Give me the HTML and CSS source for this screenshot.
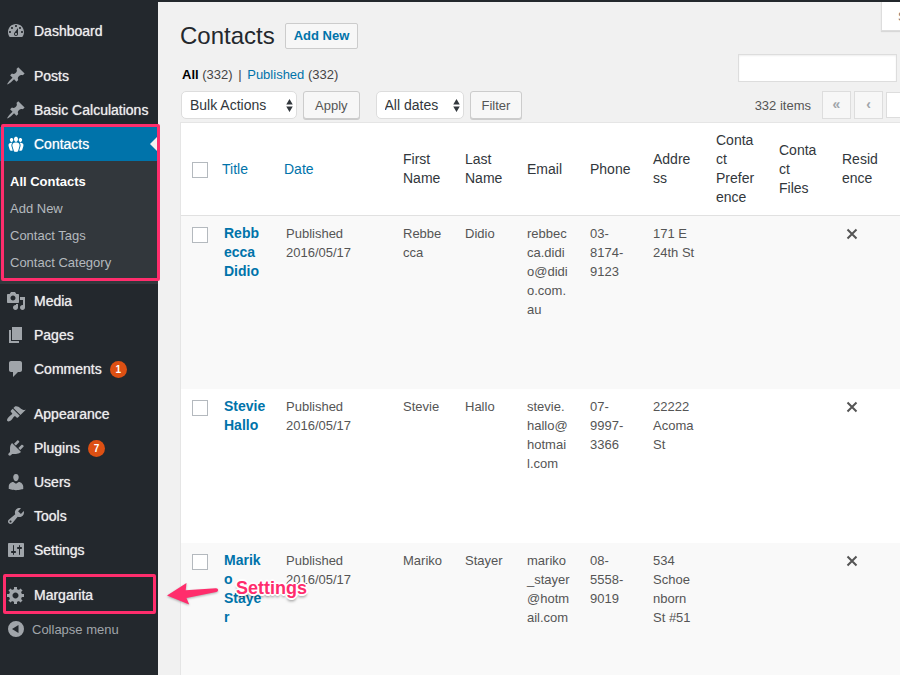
FILE: index.html
```html
<!DOCTYPE html>
<html lang="en">
<head>
<meta charset="utf-8">
<title>Contacts</title>
<link rel="stylesheet" href="styles.css">
</head>
<body>
<div class="app">
  <nav class="sidebar" aria-label="Main menu">
    <ul class="menu">
      <li><a class="item" href="#"><svg class="icon" viewBox="0 0 20 20"><path d="M3.76 16h12.48c1.1-1.37 1.76-3.11 1.76-5 0-4.42-3.58-8-8-8s-8 3.58-8 8c0 1.89.66 3.63 1.76 5zM10 4c.55 0 1 .45 1 1s-.45 1-1 1-1-.45-1-1 .45-1 1-1zM6 6c.55 0 1 .45 1 1s-.45 1-1 1-1-.45-1-1 .45-1 1-1zm8 0c.55 0 1 .45 1 1s-.45 1-1 1-1-.45-1-1 .45-1 1-1zm-5.37 5.55L12 7v6c0 1.1-.9 2-2 2s-2-.9-2-2c0-.57.24-1.08.63-1.45zM4 10c.55 0 1 .45 1 1s-.45 1-1 1-1-.45-1-1 .45-1 1-1zm12 0c.55 0 1 .45 1 1s-.45 1-1 1-1-.45-1-1 .45-1 1-1zm-5 3c0-.55-.45-1-1-1s-1 .45-1 1 .45 1 1 1 1-.45 1-1z"/></svg>Dashboard</a></li>
      <li class="group-start"><a class="item" href="#"><svg class="icon" viewBox="0 0 20 20"><path d="M10.44 3.02l1.82-1.82 6.36 6.35-1.83 1.82c-1.05-.68-2.48-.57-3.41.36l-.75.75c-.92.93-1.04 2.35-.35 3.41l-1.83 1.82-2.41-2.41-2.8 2.79c-.42.42-3.38 2.71-3.8 2.29s1.86-3.39 2.28-3.81l2.79-2.79L4.1 9.36l1.83-1.82c1.05.69 2.48.57 3.4-.36l.75-.75c.93-.92 1.05-2.35.36-3.41z"/></svg>Posts</a></li>
      <li><a class="item" href="#"><svg class="icon" viewBox="0 0 20 20"><path d="M10.44 3.02l1.82-1.82 6.36 6.35-1.83 1.82c-1.05-.68-2.48-.57-3.41.36l-.75.75c-.92.93-1.04 2.35-.35 3.41l-1.83 1.82-2.41-2.41-2.8 2.79c-.42.42-3.38 2.71-3.8 2.29s1.86-3.39 2.28-3.81l2.79-2.79L4.1 9.36l1.83-1.82c1.05.69 2.48.57 3.4-.36l.75-.75c.93-.92 1.05-2.35.36-3.41z"/></svg>Basic Calculations</a></li>
      <li class="open">
        <a class="item current" href="#"><svg class="icon" viewBox="0 0 20 20"><path d="M8.03 4.46c-.29 1.28.55 3.46 1.97 3.46 1.41 0 2.25-2.18 1.96-3.46-.22-.98-1.08-1.63-1.96-1.63-.89 0-1.74.65-1.97 1.63zm-4.13.9c-.25 1.08.47 2.93 1.67 2.93s1.92-1.85 1.67-2.93c-.19-.83-.92-1.39-1.67-1.39s-1.48.56-1.67 1.39zm8.86 0c-.25 1.08.47 2.93 1.66 2.93 1.2 0 1.92-1.85 1.67-2.93-.19-.83-.92-1.39-1.67-1.39-.74 0-1.47.56-1.66 1.39zm-.59 11.43l1.25-4.3C14.2 10 12.71 8.47 10 8.47c-2.72 0-4.21 1.53-3.44 4.02l1.26 4.3C8.05 17.51 9 18 10 18c.98 0 1.94-.49 2.17-1.21zm-6.1-7.63c-.49.67-.96 1.83-.42 3.59l1.12 3.79c-.34.2-.77.31-1.2.31-.85 0-1.65-.41-1.85-1.03l-1.07-3.65c-.65-2.11.61-3.4 2.92-3.4.27 0 .54.02.79.06-.1.1-.2.22-.29.33zm8.35-.39c2.31 0 3.58 1.29 2.92 3.4l-1.07 3.65c-.2.62-1 1.03-1.85 1.03-.43 0-.86-.11-1.2-.31l1.11-3.77c.55-1.78.08-2.94-.42-3.61-.08-.11-.18-.23-.28-.33.25-.04.51-.06.79-.06z"/></svg>Contacts</a>
        <ul class="submenu">
          <li><a class="active" href="#">All Contacts</a></li>
          <li><a href="#">Add New</a></li>
          <li><a href="#">Contact Tags</a></li>
          <li><a href="#">Contact Category</a></li>
        </ul>
        <span class="outline outline-group"></span>
      </li>
      <li><a class="item" href="#"><svg class="icon" viewBox="0 0 20 20"><path d="M13 11V4c0-.55-.45-1-1-1h-1.67L9 1H5L3.67 3H2c-.55 0-1 .45-1 1v7c0 .55.45 1 1 1h10c.55 0 1-.45 1-1zM7 4.500c1.380 0 2.500 1.120 2.500 2.500S8.380 9.500 7 9.500 4.500 8.380 4.500 7 5.620 4.500 7 4.500zM14 6h5v10.500c0 1.380-1.120 2.500-2.500 2.500S14 17.880 14 16.500s1.120-2.500 2.500-2.500c.17 0 .34.02.5.05V9h-3V6zm-4 8.050V13h2v3.500c0 1.380-1.120 2.500-2.500 2.500S7 17.880 7 16.500 8.120 14 9.500 14c.17 0 .34.02.5.05z"/></svg>Media</a></li>
      <li><a class="item" href="#"><svg class="icon" viewBox="0 0 20 20"><path d="M6 15V2h10v13H6zm-1 1h8v2H3V5h2v11z"/></svg>Pages</a></li>
      <li><a class="item" href="#"><svg class="icon" viewBox="0 0 20 20"><path d="M5 2h9c1.1 0 2 .9 2 2v7c0 1.1-.9 2-2 2h-2l-5 5v-5H5c-1.1 0-2-.9-2-2V4c0-1.1.9-2 2-2z"/></svg>Comments<span class="badge">1</span></a></li>
      <li class="group-start"><a class="item" href="#"><svg class="icon" viewBox="0 0 20 20"><path d="M14.48 11.06L7.41 3.99l1.5-1.5c.5-.56 2.3-.47 3.51.32 1.21.8 1.43 1.28 2.91 2.1 1.18.64 2.45 1.26 4.45.85zm-.71.71L6.7 4.7 4.93 6.47c-.39.39-.39 1.02 0 1.41l1.06 1.06c.39.39.39 1.03 0 1.42-.6.6-1.43 1.11-2.21 1.69-.35.26-.7.53-1.01.84C1.43 14.23.4 16.08 1.4 17.07c.99 1 2.84-.03 4.18-1.36.31-.31.58-.66.85-1.02.57-.78 1.08-1.61 1.69-2.21.39-.39 1.02-.39 1.41 0l1.06 1.06c.39.39 1.02.39 1.41 0z"/></svg>Appearance</a></li>
      <li><a class="item" href="#"><svg class="icon" viewBox="0 0 20 20"><path d="M13.11 4.36L9.87 7.6 8 5.73l3.24-3.24c.35-.34 1.05-.2 1.56.32.52.51.66 1.21.31 1.55zm-8 1.77l.91-1.12 9.01 9.01-1.19.84c-.71.71-2.63 1.16-3.82 1.16H6.14L4.9 17.26c-.59.59-1.54.59-2.12 0-.59-.58-.59-1.53 0-2.12l1.24-1.24v-3.88c0-1.13.4-3.19 1.09-3.89zm7.26 3.97l3.24-3.24c.34-.35 1.04-.21 1.55.31.52.51.66 1.21.31 1.55l-3.24 3.25z"/></svg>Plugins<span class="badge">7</span></a></li>
      <li><a class="item" href="#"><svg class="icon" viewBox="0 0 20 20"><path d="M10 9.25c-2.27 0-2.73-3.44-2.73-3.44C7 4.02 7.82 2 9.97 2c2.16 0 2.98 2.02 2.71 3.81 0 0-.41 3.44-2.68 3.44zm0 2.57L12.72 10c2.39 0 4.52 2.33 4.52 4.53v2.49s-3.65 1.13-7.24 1.13c-3.65 0-7.24-1.13-7.24-1.13v-2.49c0-2.25 1.94-4.48 4.47-4.48z"/></svg>Users</a></li>
      <li><a class="item" href="#"><svg class="icon" viewBox="0 0 20 20"><path d="M16.68 9.77c-1.34 1.34-3.3 1.67-4.95.99l-5.41 6.52c-.99.99-2.59.99-3.58 0s-.99-2.59 0-3.57l6.52-5.42c-.68-1.65-.35-3.61.99-4.95 1.28-1.28 3.12-1.62 4.72-1.06l-2.89 2.89 2.82 2.82 2.86-2.87c.53 1.58.18 3.39-1.08 4.65zM3.81 16.21c.4.39 1.04.39 1.43 0 .4-.4.4-1.04 0-1.43-.39-.4-1.03-.4-1.43 0-.39.39-.39 1.03 0 1.43z"/></svg>Tools</a></li>
      <li><a class="item" href="#"><svg class="icon" viewBox="0 0 20 20"><path d="M18 16V4c0-.55-.45-1-1-1H3c-.55 0-1 .45-1 1v12c0 .55.45 1 1 1h14c.55 0 1-.45 1-1zM8 11h1c.55 0 1 .45 1 1s-.45 1-1 1H8v1.500c0 .28-.22.5-.5.5s-.5-.22-.5-.5V13H6c-.55 0-1-.45-1-1s.45-1 1-1h1V5.500c0-.28.22-.5.5-.5s.5.22.5.5V11zm5-2h-1c-.55 0-1-.45-1-1s.45-1 1-1h1V5.500c0-.28.22-.5.5-.5s.5.22.5.5V7h1c.55 0 1 .45 1 1s-.45 1-1 1h-1v5.500c0 .28-.22.5-.5.5s-.5-.22-.5-.5V9z"/></svg>Settings</a></li>
      <li class="group-start callout">
        <a class="item" href="#"><svg class="icon" viewBox="0 0 20 20"><path d="M18 12h-2.180c-.17.7-.44 1.350-.81 1.930l1.540 1.540-2.100 2.100-1.540-1.540c-.58.36-1.230.63-1.910.79V19H8v-2.180c-.68-.16-1.330-.43-1.910-.79l-1.540 1.540-2.120-2.120 1.540-1.540c-.36-.58-.63-1.230-.79-1.910H1V9.030h2.170c.16-.7.44-1.350.8-1.940L2.430 5.550l2.100-2.100 1.540 1.540c.58-.37 1.240-.64 1.930-.81V2h3v2.180c.68.16 1.330.43 1.910.79l1.540-1.540 2.120 2.120-1.540 1.540c.36.59.64 1.240.8 1.940H18V12zm-8.500 1.500c1.660 0 3-1.340 3-3s-1.340-3-3-3-3 1.340-3 3 1.340 3 3 3z"/></svg>Margarita</a>
        <span class="outline outline-item"></span>
        <span class="pointer">
          <svg class="arrow" viewBox="0 0 54 26"><path d="M1 13.500L20.500 1l-.8 7.300L50 6.300c2.600 0 2.800 3.400.2 3.800L20.500 16l2.700 6.500z"/></svg>
          <span class="pointer-label">Settings</span>
        </span>
      </li>
      <li><button class="item collapse" type="button"><svg class="icon" viewBox="0 0 20 20"><path fill-rule="evenodd" d="M10 2a8 8 0 1 1 0 16 8 8 0 0 1 0-16zm2.500 4L6 10l6.500 4z"/></svg>Collapse menu</button></li>
    </ul>
  </nav>

  <main class="content">
    <div class="wrap">
      <header class="page-head">
        <div class="heading">
          <h1>Contacts</h1>
          <a class="add-new" href="#">Add New</a>
        </div>
        <button class="screen-tab" type="button">Screen Options</button>
      </header>

      <div class="filters">
        <p class="views"><a class="all" href="#">All</a> (332) <span class="bar">|</span> <a href="#">Published</a> (332)</p>
        <input class="search" type="search" aria-label="Search contacts">
      </div>

      <div class="tablenav">
        <div class="picker bulk">
          <select aria-label="Bulk action"><option>Bulk Actions</option></select>
          <svg viewBox="0 0 6 12"><path d="M3 0l3 5H0zM3 12L0 7h6z"/></svg>
        </div>
        <button class="button" type="button">Apply</button>
        <div class="picker dates">
          <select aria-label="Date"><option>All dates</option></select>
          <svg viewBox="0 0 6 12"><path d="M3 0l3 5H0zM3 12L0 7h6z"/></svg>
        </div>
        <button class="button" type="button">Filter</button>
        <div class="paging">
          <span class="count">332 items</span>
          <button class="page-button" type="button" disabled>«</button>
          <button class="page-button" type="button" disabled>‹</button>
          <input class="page-number" type="text" aria-label="Current page">
        </div>
      </div>

      <table class="contacts">
        <colgroup>
          <col class="c-check"><col class="c-name"><col class="c-date"><col class="c-name"><col class="c-name">
          <col class="c-field"><col class="c-field"><col class="c-field"><col class="c-field"><col class="c-field"><col class="c-field"><col>
        </colgroup>
        <thead>
          <tr>
            <th class="check"><input type="checkbox" aria-label="Select all"></th>
            <th class="sortable"><a href="#">Title</a></th>
            <th class="sortable"><a href="#">Date</a></th>
            <th>First Name</th>
            <th>Last Name</th>
            <th>Email</th>
            <th>Phone</th>
            <th>Address</th>
            <th>Contact Preference</th>
            <th>Contact Files</th>
            <th>Residence</th>
            <th></th>
          </tr>
        </thead>
        <tbody>
          <tr class="tall">
            <td class="check"><input type="checkbox" aria-label="Select Rebbecca Didio"></td>
            <td class="title"><a href="#">Rebbecca Didio</a></td>
            <td>Published<br>2016/05/17</td>
            <td>Rebbecca</td>
            <td>Didio</td>
            <td>rebbecca.didio@didio.com.au</td>
            <td>03-<wbr>8174-<wbr>9123</td>
            <td>171 E 24th St</td>
            <td></td>
            <td></td>
            <td><svg class="cross" viewBox="0 0 20 20"><path d="M5.500 5.500l9 9M14.500 5.500l-9 9"/></svg></td>
            <td></td>
          </tr>
          <tr>
            <td class="check"><input type="checkbox" aria-label="Select Stevie Hallo"></td>
            <td class="title"><a href="#">Stevie Hallo</a></td>
            <td>Published<br>2016/05/17</td>
            <td>Stevie</td>
            <td>Hallo</td>
            <td>stevie.<br>hallo@<br>hotmai<br>l.com</td>
            <td>07-<wbr>9997-<wbr>3366</td>
            <td>22222 Acoma St</td>
            <td></td>
            <td></td>
            <td><svg class="cross" viewBox="0 0 20 20"><path d="M5.500 5.500l9 9M14.500 5.500l-9 9"/></svg></td>
            <td></td>
          </tr>
          <tr>
            <td class="check"><input type="checkbox" aria-label="Select Mariko Stayer"></td>
            <td class="title"><a href="#">Mariko Stayer</a></td>
            <td>Published<br>2016/05/17</td>
            <td>Mariko</td>
            <td>Stayer</td>
            <td>mariko<wbr>_stayer<wbr>@hotm<wbr>ail.com</td>
            <td>08-<wbr>5558-<wbr>9019</td>
            <td>534 Schoenborn St #51</td>
            <td></td>
            <td></td>
            <td><svg class="cross" viewBox="0 0 20 20"><path d="M5.500 5.500l9 9M14.500 5.500l-9 9"/></svg></td>
            <td></td>
          </tr>
        </tbody>
      </table>
    </div>
  </main>
</div>
</body>
</html>
```
FILE: styles.css
```css
* { box-sizing: border-box; }

body {
  margin: 0;
  height: 100vh;
  overflow: hidden;
  background: #f1f1f1;
  color: #444;
  font: 13px/19px "Liberation Sans", Arial, sans-serif;
}

a { color: #0073aa; text-decoration: none; }
ul { list-style: none; margin: 0; padding: 0; }
button, input, select { font-family: inherit; margin: 0; }

.app {
  display: flex;
  min-height: 100vh;
  border-top: 2px solid #23282d;
}

/* Sidebar */
.sidebar {
  position: relative;
  z-index: 1;
  flex: none;
  width: 158px;
  padding-top: 12px;
  background: #23282d;
}

.item {
  display: flex;
  align-items: center;
  gap: 8px;
  height: 34px;
  padding-left: 6px;
  color: #eee;
  font-size: 14px;
  white-space: nowrap;
  text-shadow: 0 0 1px rgba(238, 238, 238, 0.8);
}

.icon { flex: none; width: 20px; height: 20px; fill: #a0a5aa; }
.group-start { margin-top: 11px; }
.open, .callout { position: relative; }

.current { position: relative; background: #0073aa; color: #fff; }
.current .icon { fill: #fff; }
.current::after {
  content: "";
  position: absolute;
  top: 9px;
  right: 0;
  border: 8px solid transparent;
  border-left: 0;
  border-right-color: #f1f1f1;
}

.submenu { padding: 7px 0 8px; background: #32373c; }
.submenu a {
  display: block;
  padding-left: 10px;
  color: #b4b9be;
  line-height: 27px;
}
.submenu .active { color: #fff; font-weight: bold; }

.badge {
  width: 17px;
  height: 17px;
  border-radius: 50%;
  background: #dd5013;
  color: #fff;
  font-size: 10px;
  font-weight: bold;
  line-height: 17px;
  text-align: center;
  text-shadow: none;
}

.collapse {
  gap: 6px;
  border: 0;
  background: none;
  color: #a0a5aa;
  font-size: 13px;
  text-shadow: none;
}

/* Highlights drawn over the menu */
.outline {
  position: absolute;
  border: 3px solid #ff2d6c;
  border-radius: 2px;
  pointer-events: none;
}
.outline-group { inset: -3px -2px 3px 1px; }
.outline-item { inset: -4px 2px -2px 3px; }

.pointer {
  position: absolute;
  top: 0;
  left: 166px;
  display: flex;
  gap: 16px;
  pointer-events: none;
}
.arrow {
  width: 54px;
  height: 26px;
  margin-top: 4px;
  fill: #ff2d6c;
  filter: drop-shadow(0 1px 1px rgba(0, 0, 0, 0.3));
}
.pointer-label {
  color: #ff2d6c;
  font-size: 18px;
  font-weight: bold;
  line-height: 20px;
  text-shadow: 2px 0 #fff, -2px 0 #fff, 0 2px #fff, 0 -2px #fff, 1px 1px #fff, -1px 1px #fff, 1px -1px #fff, -1px -1px #fff, 0 3px 3px rgba(0, 0, 0, 0.5);
}

/* Content; the list is wider than the window and is cut at its edge */
.content { flex: 1; min-width: 0; padding-left: 22px; overflow: hidden; }
.wrap { margin-right: -80px; }

.page-head { display: flex; justify-content: space-between; align-items: flex-start; }
.heading { display: flex; align-items: center; gap: 10px; padding: 21px 0 5px; }
h1 { margin: 0; color: #23282d; font-size: 24px; font-weight: normal; line-height: 26px; }
.add-new {
  padding: 0 8px;
  border: 1px solid #ccc;
  border-radius: 2px;
  background: #f7f7f7;
  font-weight: bold;
  line-height: 24px;
}
.screen-tab {
  width: 99px;
  height: 29px;
  padding: 0 0 0 16px;
  border: 1px solid #ddd;
  border-top: 0;
  background: #fff;
  color: #777;
  font-size: 13px;
  text-align: left;
  white-space: nowrap;
  box-shadow: 0 1px 1px rgba(0, 0, 0, 0.1);
}

.filters { display: flex; justify-content: space-between; align-items: flex-end; margin-bottom: 9px; }
.views { margin: 0; padding-left: 2px; line-height: 14px; }
.views .all { color: #000; font-weight: bold; }
.views .bar { padding: 0 2px; }
.search {
  appearance: none;
  width: 159px;
  height: 28px;
  margin-right: 83px;
  border: 1px solid #ddd;
  background: #fff;
  box-shadow: inset 0 1px 2px rgba(0, 0, 0, 0.07);
}

.tablenav { display: flex; align-items: center; gap: 6px; margin: 0 0 3px 1px; }
.picker { display: grid; align-items: center; }
.picker > * { grid-area: 1 / 1; }
.picker select {
  appearance: none;
  width: 100%;
  height: 28px;
  padding: 0 8px;
  border: 1px solid #ddd;
  border-radius: 5px;
  background: #fff;
  color: #32373c;
  font-size: 14px;
}
.picker svg { justify-self: end; width: 7px; height: 13px; margin-right: 4px; fill: #32373c; pointer-events: none; }
.bulk { width: 116px; }
.dates { width: 88px; margin-left: 10px; }
.button {
  height: 28px;
  padding: 0 11px;
  border: 1px solid #ccc;
  border-radius: 3px;
  background: #f7f7f7;
  color: #555;
  font-size: 13px;
  box-shadow: 0 1px 0 #ccc;
}

.paging { display: flex; align-items: center; gap: 3px; margin-left: auto; margin-right: 54px; }
.count { margin-right: 8px; color: #555; }
.page-button {
  width: 29px;
  height: 28px;
  padding: 0 0 3px;
  border: 1px solid #ddd;
  background: #f7f7f7;
  color: #a0a5aa;
  font-size: 14px;
  font-weight: bold;
}
.page-number { width: 40px; height: 26px; border: 1px solid #ddd; background: #fff; }

/* List table */
.contacts {
  width: 100%;
  table-layout: fixed;
  border: 1px solid #e5e5e5;
  border-spacing: 0;
  background: #fff;
}
.c-check { width: 33px; }
.c-name { width: 62px; }
.c-date { width: 117px; }
.c-field { width: 63px; }

.contacts th {
  height: 93px;
  padding: 8px 10px;
  border-bottom: 1px solid #e1e1e1;
  color: #32373c;
  font-size: 14px;
  font-weight: normal;
  text-align: left;
  vertical-align: middle;
  overflow-wrap: break-word;
}
.contacts .sortable { padding: 8px; }
.contacts td {
  height: 154px;
  padding: 8px 10px;
  color: #555;
  vertical-align: top;
  overflow-wrap: break-word;
}
.contacts .tall td { height: 173px; }
.contacts tbody tr:nth-child(odd) { background: #f9f9f9; }
.contacts .title { font-size: 14px; font-weight: bold; }
.contacts .check { padding: 11px 0 0 11px; }
.contacts th.check { padding: 2px 0 0 11px; }
.check input {
  appearance: none;
  display: block;
  width: 16px;
  height: 16px;
  border: 1px solid #b4b9be;
  background: #fff;
}
.cross { display: block; width: 20px; height: 20px; fill: none; stroke: #555; stroke-width: 2; }
```
